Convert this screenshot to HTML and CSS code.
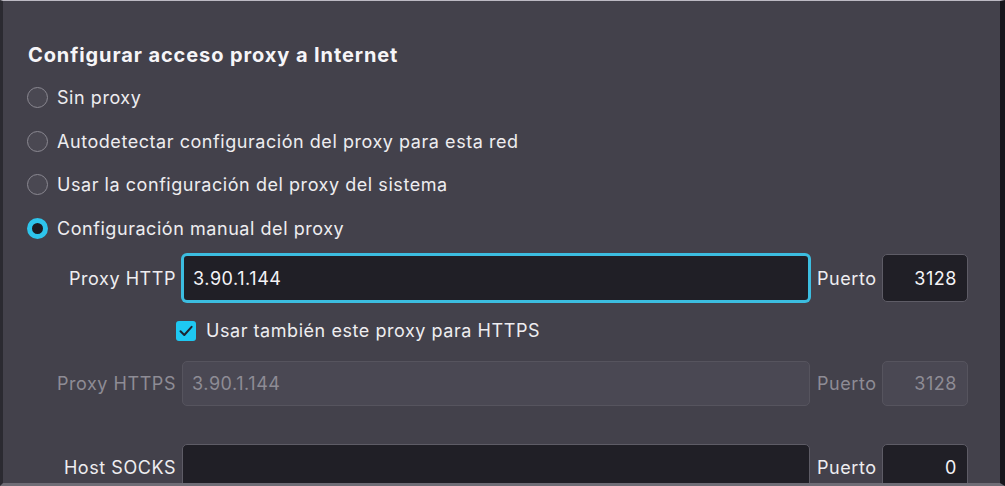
FILE: index.html
```html
<!DOCTYPE html>
<html lang="es">
<head>
<meta charset="utf-8">
<title>Configurar acceso proxy a Internet</title>
<link rel="stylesheet" href="styles.css">
</head>
<body>
<div class="window">
  <div class="content">
    <h1 class="title">Configurar acceso proxy a Internet</h1>
    <div class="radio-row"><span class="radio"></span><span class="label">Sin proxy</span></div>
    <div class="radio-row"><span class="radio"></span><span class="label">Autodetectar configuración del proxy para esta red</span></div>
    <div class="radio-row"><span class="radio"></span><span class="label">Usar la configuración del proxy del sistema</span></div>
    <div class="radio-row"><span class="radio checked"></span><span class="label">Configuración manual del proxy</span></div>

    <div class="field-row row-http">
      <span class="field-label">Proxy HTTP</span>
      <span class="input wide focused">3.90.1.144</span>
      <span class="port-label">Puerto</span>
      <span class="input port">3128</span>
    </div>

    <div class="check-row">
      <span class="checkbox"><svg width="20" height="20" viewBox="0 0 20 20"><path d="M4.5 10.2 L8.3 14 L15.6 5.8" fill="none" stroke="#1d2430" stroke-width="2" stroke-linecap="round" stroke-linejoin="round"/></svg></span>
      <span class="label">Usar también este proxy para HTTPS</span>
    </div>

    <div class="field-row row-https disabled">
      <span class="field-label">Proxy HTTPS</span>
      <span class="input wide">3.90.1.144</span>
      <span class="port-label">Puerto</span>
      <span class="input port">3128</span>
    </div>

    <div class="field-row row-socks">
      <span class="field-label">Host SOCKS</span>
      <span class="input wide"></span>
      <span class="port-label">Puerto</span>
      <span class="input port">0</span>
    </div>
  </div>
</div>
</body>
</html>
```

FILE: styles.css
```css
* { box-sizing: border-box; }
html, body {
  margin: 0;
  padding: 0;
  width: 1005px;
  height: 486px;
  overflow: hidden;
  background: #43414b;
}
body {
  font-family: Inter, "Noto Sans", "Liberation Sans", sans-serif;
  color: #eeedf0;
  font-size: 18px;
  letter-spacing: 0.55px;
}
.window {
  width: 1005px;
  height: 486px;
  background: #43414b;
  border-top: 1px solid #bcb9c3;
  border-left: 3px solid #2b2a31;
  border-right: 5px solid #17161c;
  border-bottom: 3px solid #6f6d76;
  overflow: hidden;
}
.content {
  display: flex;
  flex-direction: column;
  padding-top: 33px;
}
.title {
  margin: 0 0 0 25px;
  height: 42px;
  display: flex;
  align-items: center;
  font-size: 20px;
  font-weight: 700;
  color: #f6f5f8;
  letter-spacing: 0.9px;
}
.radio-row {
  height: 43.5px;
  display: flex;
  align-items: center;
  padding-left: 24px;
}
.label {
  font-size: 18px;
}
.radio {
  width: 21px;
  height: 21px;
  border-radius: 50%;
  border: 1.5px solid #8a8891;
  background: #4a4852;
  margin-right: 9px;
  flex: none;
}
.radio.checked {
  border: 5.5px solid #2ec5ec;
  background: #1d1c22;
}
.field-row {
  display: flex;
  align-items: center;
}
.row-http { margin-top: 4px; height: 48px; }
.row-https { height: 45px; }
.row-socks { margin-top: 38px; height: 46px; }
.field-label {
  width: 173px;
  text-align: right;
  flex: none;
}
.input {
  height: 100%;
  display: flex;
  align-items: center;
  background: #201f26;
  border: 1px solid #5e5c66;
  border-radius: 5px;
  color: #f4f3f6;
  flex: none;
}
.wide {
  width: 628px;
  margin-left: 6px;
  padding-left: 9px;
}
.focused {
  border: 2px solid #3cbde0;
  box-shadow: 0 0 0 1px #3cbde0;
}
.port-label {
  width: 72px;
  padding-left: 7px;
  flex: none;
  white-space: nowrap;
}
.port {
  width: 86px;
  justify-content: flex-end;
  padding-right: 10px;
}
.check-row {
  height: 59px;
  display: flex;
  align-items: center;
  padding-left: 173px;
  padding-bottom: 2px;
}
.checkbox {
  width: 20px;
  height: 20px;
  border-radius: 3px;
  background: #1ec8f2;
  margin-right: 10px;
  display: flex;
  flex: none;
}
.disabled .field-label,
.disabled .port-label {
  color: #8e8c95;
}
.disabled .input {
  background: #4a4853;
  border-color: #56545e;
  color: #8e8c95;
}
```
